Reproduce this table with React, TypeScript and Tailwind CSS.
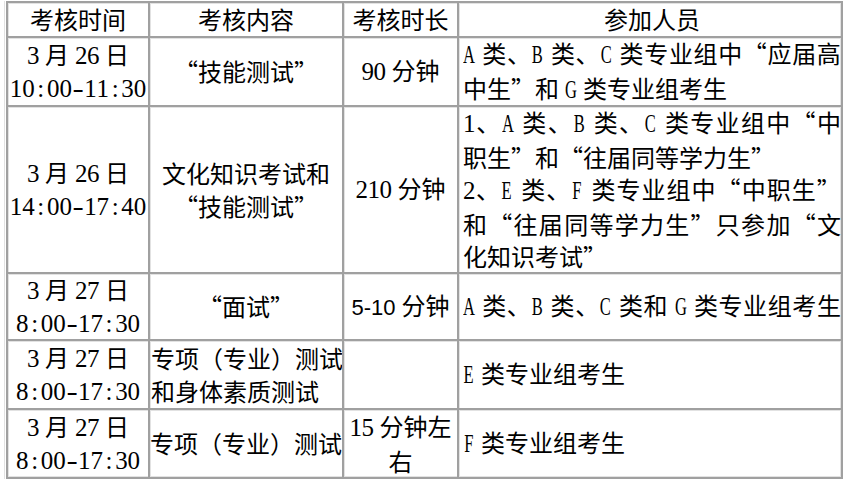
import type { ReactNode } from "react";

type Ln = { s: string; j?: boolean; t?: boolean };
type Cell = { lines?: Ln[]; left?: boolean; node?: ReactNode };

const ln = (s: string, j = false, t = false): Ln => ({ s, j, t });

// one box per character so widths follow the half/full-width grid of the original
function Ch({ c, t }: { c: string; t?: boolean }) {
  if (c === " ") return <span className="inline-block w-[6px]" />;
  if (/[A-Z]/.test(c)) {
    // half-width capitals: squeeze the Times glyph into the 12px cell
    return (
      <span className="inline-flex w-[12px] justify-center font-['Liberation_Serif'] text-[25px] leading-[32.5px]">
        <span className="inline-block scale-x-[0.66]">{c}</span>
      </span>
    );
  }
  if (c === "-") {
    return (
      <span className="inline-flex w-[12.4px] justify-center font-['Liberation_Serif'] text-[25px] leading-[32.5px]">
        <span className="inline-block scale-x-[1.35]">{c}</span>
      </span>
    );
  }
  if (/[0-9:]/.test(c)) {
    return (
      <span
        className={
          t
            ? "inline-block w-[12.4px] text-center font-['Liberation_Serif'] text-[25px] leading-[32.5px]"
            : "inline-block w-[12px] text-center font-['Liberation_Serif'] text-[25px] leading-[32.5px]"
        }
      >
        {c}
      </span>
    );
  }
  return (
    <span className="inline-block w-[24px] text-center font-['Noto_Sans_CJK_SC',sans-serif] text-[24px] leading-[32.5px]">
      {c}
    </span>
  );
}

function Line({ l, left }: { l: Ln; left?: boolean }) {
  const cls = l.j
    ? "flex items-baseline justify-between whitespace-nowrap"
    : left
      ? "flex items-baseline justify-start whitespace-nowrap"
      : "flex items-baseline justify-center whitespace-nowrap";
  return (
    <div className={cls}>
      {Array.from(l.s).map((c, i) => (
        <Ch key={i} c={c} t={l.t} />
      ))}
    </div>
  );
}

const rows: Cell[][] = [
  [
    { lines: [ln("考核时间")] },
    { lines: [ln("考核内容")] },
    { lines: [ln("考核时长")] },
    { lines: [ln("参加人员")] },
  ],
  [
    { lines: [ln("3 月 26 日"), ln("10:00-11:30", false, true)] },
    { lines: [ln("“技能测试”")] },
    { lines: [ln("90 分钟")] },
    {
      left: true,
      lines: [ln("A 类、B 类、C 类专业组中“应届高", true), ln("中生”和 G 类专业组考生")],
    },
  ],
  [
    { lines: [ln("3 月 26 日"), ln("14:00-17:40", false, true)] },
    { lines: [ln("文化知识考试和"), ln("“技能测试”")] },
    { lines: [ln("210 分钟")] },
    {
      left: true,
      lines: [
        ln("1、A 类、B 类、C 类专业组中“中", true),
        ln("职生”和“往届同等学力生”"),
        ln("2、E 类、F 类专业组中“中职生”", true),
        ln("和“往届同等学力生”只参加“文", true),
        ln("化知识考试”"),
      ],
    },
  ],
  [
    { lines: [ln("3 月 27 日"), ln("8:00-17:30", false, true)] },
    { lines: [ln("“面试”")] },
    {
      node: (
        <div className="flex items-baseline justify-center whitespace-nowrap">
          <span className="font-['Liberation_Sans'] text-[22px] leading-[32.5px]">5-10</span>
          <span className="inline-block w-[6px]" />
          <Ch c="分" />
          <Ch c="钟" />
        </div>
      ),
    },
    { left: true, lines: [ln("A 类、B 类、C 类和 G 类专业组考生", true)] },
  ],
  [
    { lines: [ln("3 月 27 日"), ln("8:00-17:30", false, true)] },
    { left: true, lines: [ln("专项（专业）测试"), ln("和身体素质测试")] },
    { lines: [] },
    { left: true, lines: [ln("E 类专业组考生")] },
  ],
  [
    { lines: [ln("3 月 27 日"), ln("8:00-17:30", false, true)] },
    { lines: [ln("专项（专业）测试")] },
    { lines: [ln("15 分钟左"), ln("右")] },
    { left: true, lines: [ln("F 类专业组考生")] },
  ],
];

function cellClass(r: number, c: number) {
  const lastRow = r === rows.length - 1;
  const lastCol = c === 3;
  const pad = c === 3 ? " pl-[4px]" : c === 1 ? " px-[1px]" : "";
  if (lastRow && lastCol)
    return (
      "flex flex-col justify-center border-2 border-[#a0a0a0] shadow-[inset_1px_1px_0_#e2e2e2,inset_-1px_-1px_0_#e2e2e2]" +
      pad
    );
  if (lastRow)
    return (
      "flex flex-col justify-center border-l-2 border-t-2 border-b-2 border-[#a0a0a0] shadow-[inset_1px_1px_0_#e2e2e2,inset_0_-1px_0_#e2e2e2]" +
      pad
    );
  if (lastCol)
    return (
      "flex flex-col justify-center border-l-2 border-t-2 border-r-2 border-[#a0a0a0] shadow-[inset_1px_1px_0_#e2e2e2,inset_-1px_0_0_#e2e2e2]" +
      pad
    );
  return "flex flex-col justify-center border-l-2 border-t-2 border-[#a0a0a0] shadow-[inset_1px_1px_0_#e2e2e2]" + pad;
}

export default function App() {
  return (
    <div className="w-[845px] h-[480px] overflow-hidden bg-white pt-[1px] text-black">
      <div className="ml-[4px] border-l border-[#e2e2e2] pl-[1px]">
        <div className="grid grid-cols-[142px_194px_115px_386px] grid-rows-[35px_69px_167px_67px_69px_71px]">
          {rows.map((row, r) =>
            row.map((cell, c) => (
              <div key={`${r}-${c}`} className={cellClass(r, c)}>
                {cell.node ??
                  cell.lines?.map((l, i) => (
                    <Line key={i} l={l} left={cell.left && !(r === 0)} />
                  ))}
              </div>
            )),
          )}
        </div>
      </div>
    </div>
  );
}
